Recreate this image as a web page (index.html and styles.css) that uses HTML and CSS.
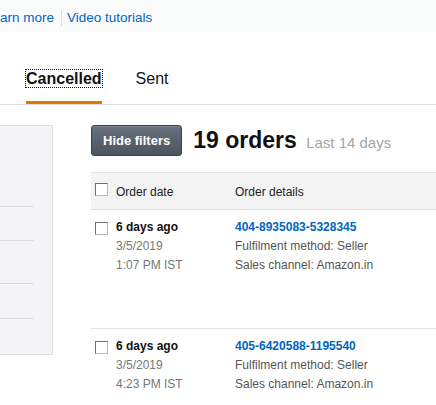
FILE: index.html
```html
<!doctype html>
<html lang="en">
<head>
	<meta charset="utf-8">
	<title>Manage orders</title>
	<link rel="stylesheet" href="styles.css">
</head>
<body>
	<div class="top-links">
		<a href="#" class="first">Learn more</a><span class="sep"></span><a href="#">Video tutorials</a>
	</div>
	<nav class="tabs">
		<a href="#" class="tab active"><span>Cancelled</span></a>
		<a href="#" class="tab"><span>Sent</span></a>
	</nav>
	<main class="layout">
		<aside class="filters">
			<div class="filter f1"></div>
			<div class="filter f2"></div>
			<div class="filter f3"></div>
			<div class="filter f4"></div>
			<div class="filter f5"></div>
		</aside>
		<section class="orders">
			<div class="orders-head">
				<button class="btn-dark">Hide filters</button>
				<h1>19 orders <span>Last 14 days</span></h1>
			</div>
			<div class="grid">
				<div class="row head">
					<div class="cell date"><span class="check"></span><span>Order date</span></div>
					<div class="cell">Order details</div>
				</div>
				<div class="row">
					<div class="cell date">
						<span class="check"></span>
						<div>
							<div class="ago">6 days ago</div>
							<div class="muted">3/5/2019</div>
							<div class="muted">1:07 PM IST</div>
						</div>
					</div>
					<div class="cell">
						<a href="#" class="order-id">404-8935083-5328345</a>
						<div class="info">Fulfilment method: Seller</div>
						<div class="info">Sales channel: Amazon.in</div>
					</div>
				</div>
				<div class="row last">
					<div class="cell date">
						<span class="check"></span>
						<div>
							<div class="ago">6 days ago</div>
							<div class="muted">3/5/2019</div>
							<div class="muted">4:23 PM IST</div>
						</div>
					</div>
					<div class="cell">
						<a href="#" class="order-id">405-6420588-1195540</a>
						<div class="info">Fulfilment method: Seller</div>
						<div class="info">Sales channel: Amazon.in</div>
					</div>
				</div>
			</div>
		</section>
	</main>
</body>
</html>
```

FILE: styles.css
```css
* {
	box-sizing: border-box;
}
html, body {
	margin: 0;
	padding: 0;
	background-color: #FFFFFF;
	color: #111111;
	font-family: "Liberation Sans", Arial, sans-serif;
	overflow: hidden;
}
a {
	color: #0066C0;
	text-decoration: none;
}
.top-links {
	display: flex;
	align-items: center;
	height: 32px;
	background-color: #FAFCFC;
	font-size: 13.5px;
	padding-top: 3px;
}
.top-links .first {
	margin-left: -15px;
}
.top-links .sep {
	width: 1px;
	height: 16px;
	margin: 0 5px 0 7px;
	background-color: #DDDDDD;
}
.tabs {
	display: flex;
	align-items: flex-end;
	height: 73px;
	padding-left: 26px;
	border-bottom: 1px solid #DDDDDD;
}
.tab {
	display: block;
	margin-right: 34px;
	padding-bottom: 13px;
	border-bottom: 3px solid transparent;
	color: #111111;
	font-size: 16px;
	line-height: 19px;
}
.tab.active {
	border-bottom-color: #E77600;
	font-weight: bold;
}
.tab.active span {
	outline: 1px dotted #111111;
}
.layout {
	display: flex;
	align-items: flex-start;
	padding-top: 20px;
}
.filters {
	flex: 0 0 53px;
	padding-right: 18px;
	background-color: #F4F3F6;
	border: 1px solid #DDDDDD;
	border-left: none;
}
.filter {
	border-bottom: 1px solid #DDDDDD;
}
.f1 { height: 81px; }
.f2 { height: 34px; }
.f3 { height: 43px; }
.f4 { height: 35px; }
.f5 { height: 35px; border-bottom: none; }
.orders {
	flex: 1;
	min-width: 0;
	margin-left: 38px;
}
.orders-head {
	display: flex;
	align-items: center;
	gap: 11px;
	height: 31px;
}
.btn-dark {
	height: 31px;
	padding: 0 11px;
	border: 1px solid #3A4149;
	border-radius: 3px;
	background: linear-gradient(#66717D, #4B545F);
	color: #FFFFFF;
	font-family: "Liberation Sans", Arial, sans-serif;
	font-size: 13px;
	font-weight: bold;
	box-shadow: inset 0 1px 0 rgba(255, 255, 255, 0.15);
}
.orders-head h1 {
	margin: 0;
	font-size: 23px;
	font-weight: bold;
	white-space: nowrap;
}
.orders-head h1 span {
	margin-left: 3px;
	color: #A5A5A5;
	font-size: 15px;
	font-weight: normal;
}
.grid {
	margin-top: 16px;
	font-size: 12px;
	line-height: 19px;
}
.row {
	display: flex;
	height: 119px;
	padding-top: 8px;
	border-bottom: 1px solid #E4E4E8;
}
.row.last {
	height: auto;
	border-bottom: none;
}
.row.head {
	height: 38px;
	padding-top: 3px;
	align-items: center;
	background-color: #F3F3F4;
	border-top: 1px solid #E2E2E2;
	border-bottom: 1px solid #DDDDDD;
	color: #222222;
}
.cell.date {
	display: flex;
	align-items: flex-start;
	gap: 8px;
	width: 144px;
	padding-left: 4px;
}
.row.head .cell.date {
	align-items: center;
}
.check {
	flex: 0 0 13px;
	width: 13px;
	height: 13px;
	margin-top: 4px;
	background-color: #FFFFFF;
	border: 1px solid;
	border-color: #6E6E6E #B8B8B8 #B8B8B8 #6E6E6E;
}
.row.head .check {
	margin-top: -7px;
}
.ago {
	font-weight: bold;
}
.muted {
	color: #777777;
}
.order-id {
	display: block;
	font-weight: bold;
}
.info {
	color: #555555;
}
```
